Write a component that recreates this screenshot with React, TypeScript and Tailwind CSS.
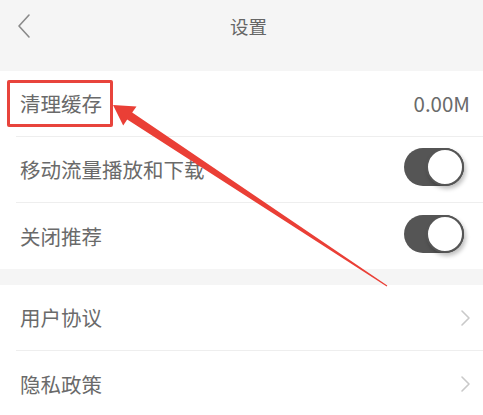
import React from 'react';

const FONT = "font-['Noto_Sans_CJK_SC','Noto_Sans',sans-serif]";

const Toggle: React.FC = () => (
  <div className="relative w-[60px] h-[38px] -mt-[5px] mr-[6px] rounded-full bg-[#555555]">
    <div className="absolute right-0 top-0 w-[38px] h-[38px] rounded-full bg-white border-[2.5px] border-[#555555] shadow-[2px_3px_4px_rgba(0,0,0,0.25)]" />
  </div>
);

const Chevron: React.FC = () => (
  <svg width="12" height="18" viewBox="0 0 12 18" fill="none" className="-mr-[2px]">
    <path d="M2 2l7 7-7 7" stroke="#c9c9c9" strokeWidth="1.6" strokeLinecap="round" strokeLinejoin="round" />
  </svg>
);

const Row: React.FC<{ label: string; right?: React.ReactNode; last?: boolean; highlight?: boolean }> = ({
  label,
  right,
  last,
  highlight,
}) => (
  <div className="bg-white pl-4">
    <div className={`h-[66px] flex items-center justify-between pr-[13px] ${last ? '' : 'border-b border-[#eeeeee]'}`}>
      <span className="relative pl-1 text-[20.5px] text-[#6a6a6a] leading-none">
        {highlight && (
          <span className="absolute -left-[9px] -top-[13px] w-[106px] h-[47px] border-[3px] border-[#e8443c] rounded-[2px]" />
        )}
        {label}
      </span>
      {right}
    </div>
  </div>
);

export default function App() {
  return (
    <div className={`relative w-[483px] h-[415px] overflow-hidden bg-[#f5f5f5] ${FONT}`}>
      {/* header */}
      <div className="relative h-[50px] flex items-center justify-center">
        <svg className="absolute left-[16px] top-[13px]" width="16" height="26" viewBox="0 0 16 26" fill="none">
          <path d="M13 2L3 13l10 11" stroke="#8a8a8a" strokeWidth="1.6" strokeLinecap="round" strokeLinejoin="round" />
        </svg>
        <span className="ml-[14px] mt-[4px] text-[18.5px] text-[#666666]">设置</span>
      </div>
      <div className="h-[21px]" />

      <Row label="清理缓存" highlight right={<span className="text-[20.5px] text-[#6a6a6a] leading-none">0.00M</span>} />
      <Row label="移动流量播放和下载" right={<Toggle />} />
      <Row label="关闭推荐" right={<Toggle />} last />

      <div className="h-[16px]" />

      <Row label="用户协议" right={<Chevron />} />
      <Row label="隐私政策" right={<Chevron />} last />

      {/* annotation arrow */}
      <svg className="absolute left-0 top-0 pointer-events-none" width="483" height="415" viewBox="0 0 483 415">
        <polygon
          points="113,105 136.5,106.5 132.2,112.6 387.3,285.6 386.7,286.4 127.2,119.5 123.2,125.5"
          fill="#ea3f36"
        />
      </svg>
    </div>
  );
}
